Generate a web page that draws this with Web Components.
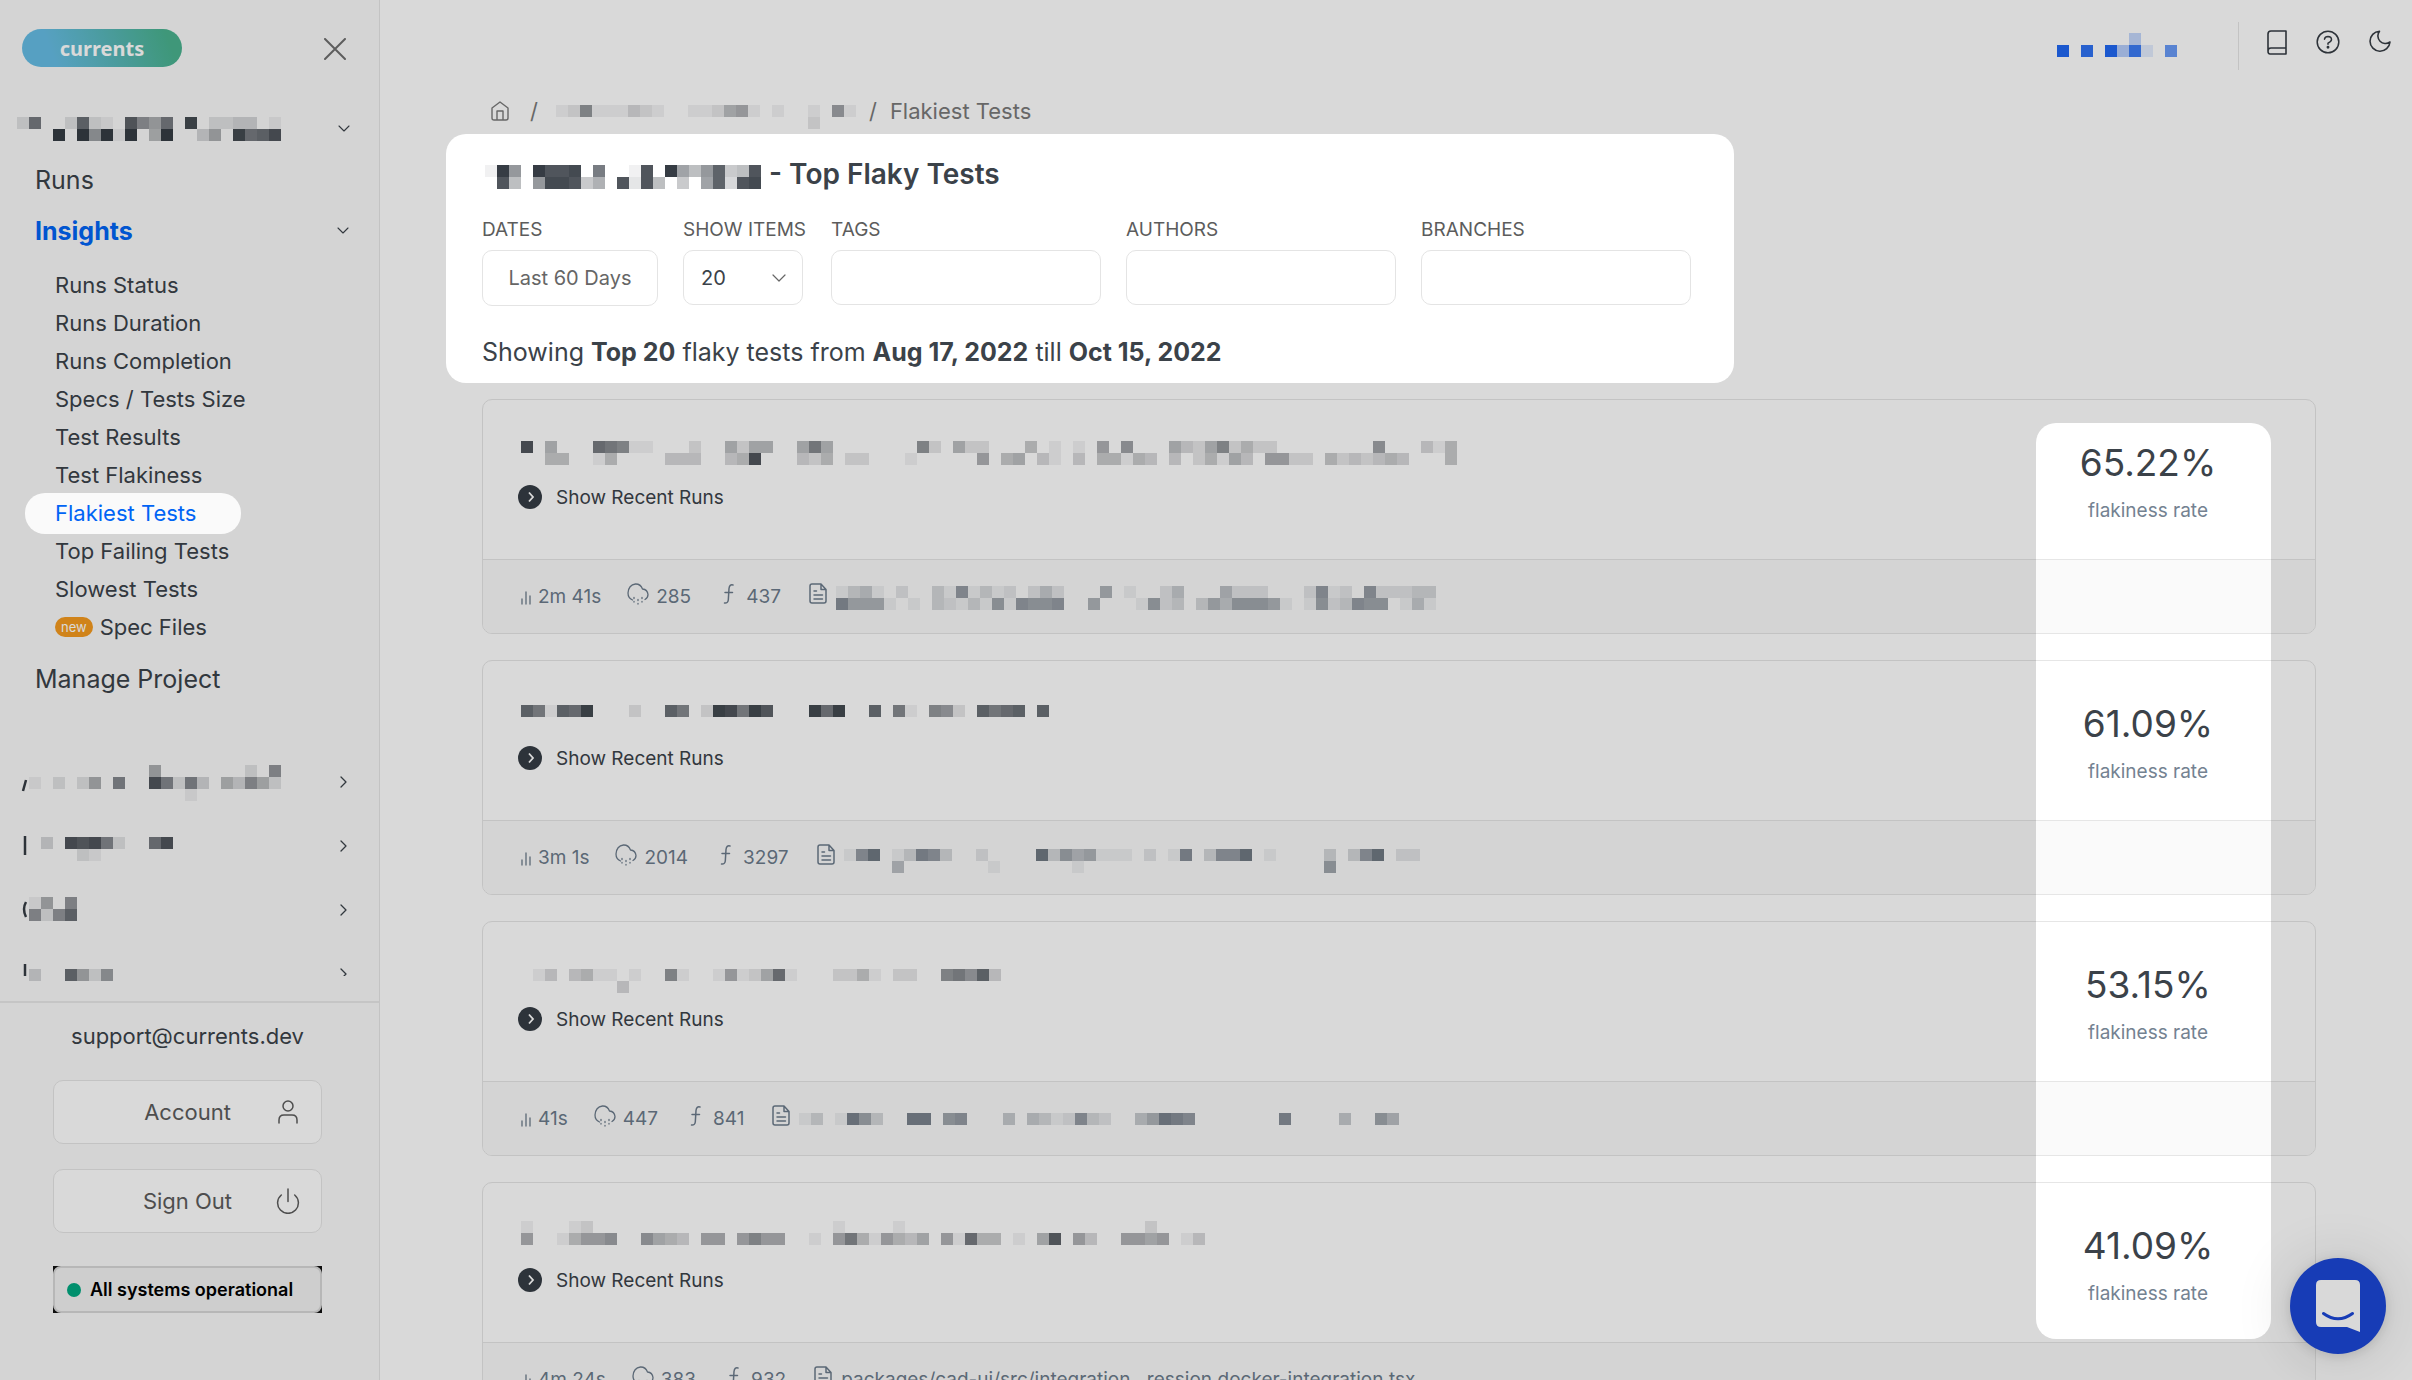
<!DOCTYPE html>
<html lang="en">
<head>
<meta charset="utf-8">
<title>Flakiest Tests</title>
<style>
  html, body { margin: 0; height: 100%; }
  body { overflow: hidden; background: #fff; color: #3b4249; font-family: Inter, "Liberation Sans", sans-serif; font-size: 20px; }
</style>
</head>
<body>
<app-shell></app-shell>
<script>
const define = (name, html, setup) => {
  const tpl = document.createElement('template');
  tpl.innerHTML = html;
  customElements.define(name, class extends HTMLElement {
    connectedCallback() {
      if (this.shadowRoot) return;
      const root = this.attachShadow({ mode: 'open' });
      root.append(tpl.content.cloneNode(true));
      if (setup) setup(this, root);
    }
  });
};

const ICONS = {
  close: [22, 22, '<path d="M1 1L21 21M21 1L1 21" stroke-width="2"/>'],
  down: [12, 8, '<path d="M1 1L6 6L11 1" stroke-width="1.1"/>'],
  wide: [14, 10, '<path d="M1 2L7 8L13 2" stroke-width="1.2"/>'],
  right: [8, 12, '<path d="M1 1L6 6L1 11" stroke-width="1.3"/>'],
  home: [18, 20, '<path d="M1 7L9 1L17 7V17Q17 19 15 19H3Q1 19 1 17ZM6 19V10H12V19" stroke-width="1.4"/>'],
  user: [20, 24, '<circle cx="10" cy="6" r="5"/><path d="M1 23V20Q1 15 6 15H14Q19 15 19 20V23" />'],
  power: [24, 26, '<path d="M12 1V13.500M5.300 7A10.400 10.400 0 1 0 18.700 7"/>'],
  book: [20, 25, '<path d="M1 21V4Q1 1 4 1H19V24H3Q1 24 1 21Q1 18 4 18H19" stroke-width="1.6"/>'],
  help: [24, 24, '<circle cx="12" cy="12" r="10.800"/><path d="M8.500 9.200Q9 6.500 12 6.500Q15.500 6.600 15.500 9.600Q15.500 11.600 12 13.200V14.200" /><circle cx="12" cy="17.300" r=".7" fill="currentColor"/>'],
  moon: [22, 22, '<path d="M21 12A10 10 0 1 1 10.500 1.200A7.600 7.600 0 0 0 21 12Z" stroke-width="1.600"/>'],
  bars: [10, 22, '<path d="M1 16V21M5 9V21M9 13V21" stroke-width="1.300"/>'],
  cloud: [22, 22, '<path d="M5.500 17Q1 15 1 10Q1.500 2 8.500 1Q13.500 .8 15.500 6Q20.500 6.500 21 11.500Q21 15 18 16.500" stroke-width="1.300"/><path d="M7 14.500V15.500M11 16.500V17.500M15 14.500V15.500M7 18.500V19M11 20.500V21M15 18.500V19" stroke-width="1.300"/>'],
  func: [22, 22, '<path d="M16 2Q12.500 1 12 5.500L11.300 17Q10.800 20.500 7.500 20M8 9.500H15.500" stroke-width="1.500"/>'],
  file: [22, 22, '<path d="M3 3Q3 1 5 1H14L19 6.500V18Q19 20 17 20H5Q3 20 3 18ZM14 1V6.500H19M7 8H9.500M7 12H15.500M7 16H15.500" stroke-width="1.500"/>']
};

define('ui-icon', `<style>
  :host { display: block; flex: none; }
  svg { display: block; fill: none; stroke: currentColor; stroke-width: 1.500; stroke-linecap: round; stroke-linejoin: round; }
</style>`, (host, root) => {
  const [w, h, body] = ICONS[host.getAttribute('name')];
  root.innerHTML += `<svg width="${w}" height="${h}" viewBox="0 0 ${w} ${h}" aria-hidden="true">${body}</svg>`;
});

/* Redacted text: each hex digit is the strength of one 12px cell, a dot is an empty cell. */
define('pixel-mosaic', `<style>
  :host { display: block; flex: none; }
  svg { display: block; overflow: visible; }
</style>`, (host, root) => {
  const rows = host.getAttribute('rows').split('|');
  const x = +(host.getAttribute('left') || 0), y = +(host.getAttribute('top') || 0);
  const height = host.getAttribute('height') || 24;
  const width = x + 12 * Math.max(...rows.map(r => r.length));
  const tint = host.getAttribute('tint') || '#363c44';
  let body = host.hasAttribute('mark') ? `<path d="${host.getAttribute('mark')}" fill="none" stroke="${tint}" stroke-width="2.500"/>` : '';
  rows.forEach((row, j) => [...row].forEach((c, i) => {
    if (c !== '.') body += `<rect x="${x + i * 12}" y="${y + j * 12}" width="12" height="12" fill="${tint}" fill-opacity="${(parseInt(c, 16) / 15).toFixed(2)}"/>`;
  }));
  root.innerHTML += `<svg width="${width}" height="${height}" shape-rendering="${host.hasAttribute('mark') ? 'auto' : 'crispEdges'}" aria-hidden="true">${body}</svg>`;
});

define('nav-item', `<style>
  :host { display: block; }
  a { display: flex; align-items: center; justify-content: space-between; height: 51px; padding: 0 30px 0 35px; color: inherit; text-decoration: none; font-size: 25px; }
  :host([active]) a { color: #0064f5; font-weight: 700; }
  ui-icon { color: #3b4249; }
  :host([sub]) a { height: 38px; padding-left: 55px; font-size: 22px; justify-content: flex-start; gap: 7px; }
  :host([sub][active]) a { font-weight: 400; }
</style><a href="#"><slot></slot></a>`, (host, root) => {
  if (host.hasAttribute('open')) root.querySelector('a').insertAdjacentHTML('beforeend', '<ui-icon name="down"></ui-icon>');
});

define('project-row', `<style>
  :host { display: block; height: 64px; }
  :host([cut]) { height: 35px; }
  a { display: flex; justify-content: space-between; height: 100%; padding: 0 31px 0 17px; color: inherit; }
  .arrow { overflow: hidden; padding-top: 27px; box-sizing: border-box; height: 100%; }
</style><a href="#" aria-label="Project"><slot></slot><div class="arrow"><ui-icon name="right"></ui-icon></div></a>`);

define('side-button', `<style>
  :host { display: block; }
  button { display: grid; grid-template-columns: 44px 1fr 44px; align-items: center; width: 100%; height: 64px; box-sizing: border-box; padding: 0 11px; border: 1px solid #e6e6e6; border-radius: 10px; background: #fff; color: #5c5c5c; font: 400 22px Inter, sans-serif; }
  .text { grid-column: 2; }
  .icon { display: grid; place-items: center; }
</style><button type="button"><span class="text"><slot></slot></span><span class="icon"></span></button>`, (host, root) => {
  root.querySelector('.icon').innerHTML = `<ui-icon name="${host.getAttribute('icon')}"></ui-icon>`;
});

define('app-sidebar', `<style>
  :host { display: block; flex: none; width: 379px; background: #fafafa; border-right: 1px solid #e6e6e6; overflow: hidden; }
  header { display: flex; justify-content: space-between; align-items: flex-start; height: 38px; padding: 29px 33px 0 22px; margin-bottom: 36px; color: #6e6e6e; }
  .logo { display: grid; place-items: center; width: 160px; height: 38px; border-radius: 19px; background: linear-gradient(70deg, #66bde4 20%, #4ab28f 90%); color: #fff; font: 700 20px "Noto Sans", sans-serif; text-decoration: none; }
  .close { padding: 9px 0 0; border: 0; background: none; color: inherit; }
  .org { display: flex; align-items: center; justify-content: space-between; height: 51px; padding: 0 29px 0 17px; }
  .sub { padding: 10px 0 7px; }
  .badge { padding: 0 6px; border-radius: 10px; background: #f59b1f; color: #fff; font-size: 13px; line-height: 20px; }
  .projects { padding-top: 45px; }
  footer { display: flex; flex-direction: column; margin-top: 25px; padding: 18px 57px 0 53px; border-top: 2px solid #e8e8e8; }
  .mail { align-self: center; color: inherit; text-decoration: none; font-size: 22px; line-height: 30px; margin-bottom: 29px; }
  side-button + side-button { margin-top: 25px; }
  .corners { margin-top: 33px; background: #111; }
  .status { display: flex; align-items: center; gap: 9px; height: 43px; padding: 0 12px; border: 2px solid #d8d8d8; border-radius: 8px; background: #f2f2f2; color: #000; font-size: 18px; font-weight: 600; white-space: nowrap; text-decoration: none; }
  .status i { width: 14px; height: 14px; border-radius: 50%; background: #00a881; }
</style>
<header><a class="logo" href="#">currents</a><button class="close" type="button" aria-label="Close menu"><ui-icon name="close"></ui-icon></button></header>
<div class="org"><pixel-mosaic rows="2a..2b21.c86a.e.2233.1|...f.f7f1f.5f..36.eabd"></pixel-mosaic><ui-icon name="down"></ui-icon></div>
<nav>
  <nav-item>Runs</nav-item>
  <nav-item active open>Insights</nav-item>
  <div class="sub">
    <nav-item sub>Runs Status</nav-item>
    <nav-item sub>Runs Duration</nav-item>
    <nav-item sub>Runs Completion</nav-item>
    <nav-item sub>Specs / Tests Size</nav-item>
    <nav-item sub>Test Results</nav-item>
    <nav-item sub>Test Flakiness</nav-item>
    <nav-item sub active>Flakiest Tests</nav-item>
    <nav-item sub>Top Failing Tests</nav-item>
    <nav-item sub>Slowest Tests</nav-item>
    <nav-item sub><span class="badge">new</span>Spec Files</nav-item>
  </div>
  <nav-item>Manage Project</nav-item>
</nav>
<div class="projects">
  <project-row><pixel-mosaic height="60" top="16" mark="M6 42L9 31" rows="...........6.......2.8|.1.2.26.9..d9293.53852|..............1"></pixel-mosaic></project-row>
  <project-row><pixel-mosaic height="60" top="24" mark="M8 23V42" rows="..3.dcd92..ad|.....21"></pixel-mosaic></project-row>
  <project-row><pixel-mosaic height="60" top="20" mark="M9 25Q5 32 9 40" rows=".16.8|.828b"></pixel-mosaic></project-row>
  <project-row cut><pixel-mosaic height="35" top="28" mark="M8 23V35" rows=".3..b627"></pixel-mosaic></project-row>
</div>
<footer>
  <a class="mail" href="#">support@currents.dev</a>
  <side-button icon="user">Account</side-button>
  <side-button icon="power">Sign Out</side-button>
  <div class="corners"><a class="status" href="#"><i></i>All systems operational</a></div>
</footer>`);

define('top-bar', `<style>
  :host { display: flex; justify-content: flex-end; align-items: flex-start; padding: 22px 21px 0 0; }
  nav { display: flex; gap: 29px; height: 40px; padding: 8px 0 0 28px; border-left: 1px solid #e6e6e6; }
  pixel-mosaic { margin-right: 61px; }
  a { color: #363c44; }
</style>
<pixel-mosaic tint="#2068f2" top="11" height="40" rows="........4|..f.e.f5d2.a"></pixel-mosaic>
<nav><a href="#" aria-label="Docs"><ui-icon name="book"></ui-icon></a><a href="#" aria-label="Help"><ui-icon name="help"></ui-icon></a><a href="#" aria-label="Dark mode"><ui-icon name="moon"></ui-icon></a></nav>`);

define('bread-crumbs', `<style>
  :host { display: flex; align-items: center; gap: 13px; height: 30px; padding-left: 9px; color: #7a7a7a; font-size: 22px; }
  a { color: inherit; margin-right: 8px; }
  pixel-mosaic { margin-left: 5px; }
</style>
<a href="#" aria-label="Home"><ui-icon name="home"></ui-icon></a><span>/</span>
<pixel-mosaic top="9" height="30" rows="128111321..112561.1..1.71|.....................2"></pixel-mosaic>
<span>/</span><span>Flakiest Tests</span>`);

define('filter-field', `<style>
  :host { display: flex; flex-direction: column; gap: 8px; }
  label { font-size: 19px; line-height: 24px; color: #5c5c5c; white-space: nowrap; }
  input, select, button { box-sizing: border-box; height: 55px; border: 1px solid #e4e4e4; border-radius: 10px; background: #fff; font: 400 20px Inter, sans-serif; }
  input { width: 270px; padding: 0 16px; }
  button { width: 176px; height: 56px; padding: 0; color: #666; }
  .pick { display: grid; width: 120px; }
  select { grid-area: 1 / 1; appearance: none; width: 100%; padding: 0 17px; color: #3b4249; }
  .pick ui-icon { grid-area: 1 / 1; place-self: center end; margin-right: 17px; color: #666; pointer-events: none; }
</style><label for="c"></label>`, (host, root) => {
  root.querySelector('label').textContent = host.getAttribute('label');
  const v = host.getAttribute('value');
  root.querySelector('label').insertAdjacentHTML('afterend', {
    button: `<button id="c" type="button">${v}</button>`,
    select: `<div class="pick"><select id="c"><option>${v}</option></select><ui-icon name="wide"></ui-icon></div>`,
    input: '<input id="c" type="text">'
  }[host.getAttribute('kind')]);
});

define('page-intro', `<style>
  :host { display: block; }
  h1 { display: flex; gap: 8px; margin: 30px 0 26px; font-size: 28px; line-height: 36px; font-weight: 600; }
  .filters { display: flex; gap: 25px; }
  p { margin: 28px 0 29px; font-size: 25px; line-height: 36px; }
  b { font-weight: 700; }
</style>
<h1><pixel-mosaic left="3" top="9" height="36" rows="1f8.fdde.a..1d.f758c45d|.d5.8eed46.d2d5.4.7c3de"></pixel-mosaic><span>- Top Flaky Tests</span></h1>
<div class="filters">
  <filter-field kind="button" label="DATES" value="Last 60 Days"></filter-field>
  <filter-field kind="select" label="SHOW ITEMS" value="20"></filter-field>
  <filter-field kind="input" label="TAGS"></filter-field>
  <filter-field kind="input" label="AUTHORS"></filter-field>
  <filter-field kind="input" label="BRANCHES"></filter-field>
</div>
<p>Showing <b>Top 20</b> flaky tests from <b>Aug 17, 2022</b> till <b>Oct 15, 2022</b></p>`);

define('flaky-card', `<style>
  :host { display: block; border: 1px solid #e6e6e6; border-radius: 10px; overflow: hidden; background: #fff; }
  .top { display: grid; grid-template-columns: 1fr 190px; height: 159px; padding: 0 72px 0 38px; }
  .title { padding-top: 38px; height: 47px; }
  button { display: flex; align-items: center; gap: 12px; height: 24px; padding: 0; border: 0; background: none; color: #3b4249; font: 400 19px Inter, sans-serif; }
  .dot { display: block; margin: 0 0 0 -3px; }
  .rate { text-align: center; padding-top: 39px; }
  .rate strong { display: block; font-weight: 400; font-size: 37px; line-height: 48px; }
  .rate span { display: block; margin-top: 10px; font-size: 19px; line-height: 28px; color: #748291; }
  footer { display: flex; align-items: center; gap: 26px; height: 73px; padding-left: 38px; border-top: 1px solid #e6e6e6; background: #fafafa; color: #6c7b8b; font-size: 19px; white-space: nowrap; }
  .stat { display: flex; align-items: center; gap: 7px; }
  .stat ui-icon { margin-bottom: 6px; }
</style>
<div class="top">
  <div><div class="title"><slot name="title"></slot></div>
  <button type="button"><svg class="dot" width="26" height="24" viewBox="0 0 26 24" aria-hidden="true"><circle cx="12" cy="12" r="12" fill="#363d45"/><path d="M11 7.500L15 12L11 16.500" fill="none" stroke="#fff" stroke-width="1.800"/></svg>Show Recent Runs</button></div>
  <div class="rate"><strong></strong><span>flakiness rate</span></div>
</div>
<footer>
  <div class="stat"><ui-icon name="bars"></ui-icon><span id="time"></span></div>
  <div class="stat"><ui-icon name="cloud"></ui-icon><span id="flaky"></span></div>
  <div class="stat"><ui-icon name="func"></ui-icon><span id="runs"></span></div>
  <div class="stat"><ui-icon name="file"></ui-icon><slot name="file"></slot></div>
</footer>`, (host, root) => {
  root.querySelector('strong').textContent = host.getAttribute('rate');
  for (const k of ['time', 'flaky', 'runs']) root.getElementById(k).textContent = host.getAttribute(k);
});

define('dim-overlay', `<style>
  :host { position: absolute; inset: 0; pointer-events: none; }
  svg { display: block; width: 100%; height: 100%; }
  .rates { x: calc(100% - 376px); }
</style>
<svg aria-hidden="true"><mask id="m" maskUnits="userSpaceOnUse" x="0" y="0" width="100%" height="100%">
  <rect width="100%" height="100%" fill="#fff"/>
  <rect x="25" y="493" width="216" height="41" rx="20"/>
  <rect x="446" y="134" width="1288" height="249" rx="20"/>
  <rect class="rates" y="423" width="235" height="916" rx="20"/>
</mask><rect width="100%" height="100%" fill="#000" fill-opacity=".15" mask="url(#m)"/></svg>`);

define('chat-launcher', `<style>
  :host { position: absolute; right: 26px; bottom: 26px; }
  button { display: grid; place-items: center; width: 96px; height: 96px; padding: 0; border: 0; border-radius: 50%; background: #1c47d6; box-shadow: 0 2px 12px rgba(0,0,0,.12), 0 4px 60px rgba(0,0,0,.14); }
</style>
<button type="button" aria-label="Open chat"><svg width="44" height="52" viewBox="0 0 44 52" aria-hidden="true"><path d="M5 0H39Q44 0 44 5V52L31 47H5Q0 47 0 42V5Q0 0 5 0Z" fill="#fff"/><path d="M7.500 33.500Q22 44 36.500 33.500" fill="none" stroke="#1c47d6" stroke-width="3" stroke-linecap="round"/></svg></button>`);

define('app-shell', `<style>
  :host { display: flex; position: relative; height: 100vh; overflow: hidden; }
  main { flex: 1; min-width: 0; }
  .body { padding: 26px 96px 0 102px; }
  .cards { display: flex; flex-direction: column; gap: 26px; }
  top-bar { height: 48px; }
</style>
<app-sidebar></app-sidebar>
<main>
  <top-bar></top-bar>
  <div class="body">
    <bread-crumbs></bread-crumbs>
    <page-intro></page-intro>
    <div class="cards">
      <flaky-card rate="65.22%" time="2m 41s" flaky="285" runs="437">
        <pixel-mosaic slot="title" top="3" height="36" rows="d.5...a9811...2..5255..595.......82.522...4.1.1.6.7...532582422........7...314|..44..14....333..34d...324.22...1.....6.45.31.3.44143.3.24153.6622.4232343...4"></pixel-mosaic>
        <pixel-mosaic slot="file" top="1" height="24" tint="#3c4856" rows="1341.2..3181312.242...6.1..24...5222...2812.822233|96661.1.32131718778..6...1723.36477761.1723877.141"></pixel-mosaic>
      </flaky-card>
      <flaky-card rate="61.09%" time="3m 1s" flaky="2014" runs="3297">
        <pixel-mosaic slot="title" top="6" height="36" rows="b91bae...2..b9.2ed9ec...eae..b.91.872.b9ab.b"></pixel-mosaic>
        <pixel-mosaic slot="file" top="3" height="24" tint="#3c4856" rows="18b.13983..2....b3756111.2.19.388b.1....3.38b.22|....5.......1......1....................7"></pixel-mosaic>
      </flaky-card>
      <flaky-card rate="53.15%" time="41s" flaky="447" runs="841">
        <pixel-mosaic slot="title" top="9" height="36" rows=".13.3411.1..81..16125a1...2241.22..897b3|........3"></pixel-mosaic>
        <pixel-mosaic slot="file" top="6" height="24" tint="#3c4856" rows="13.1a73..aa.78...4.4312832..46a98.......9....4..75"></pixel-mosaic>
      </flaky-card>
      <flaky-card rate="41.09%" time="4m 24s" flaky="383" runs="932">
        <pixel-mosaic slot="title" height="36" rows="1...12....................1....1....................2|6..14667..7543.66.6866..1.69416435.61a44.1.5c.63..6656.13"></pixel-mosaic>
        <span slot="file">packages/cad-ui/src/integration...ression.docker-integration.tsx</span>
      </flaky-card>
    </div>
  </div>
</main>
<chat-launcher></chat-launcher>
<dim-overlay></dim-overlay>`);
</script>
</body>
</html>
